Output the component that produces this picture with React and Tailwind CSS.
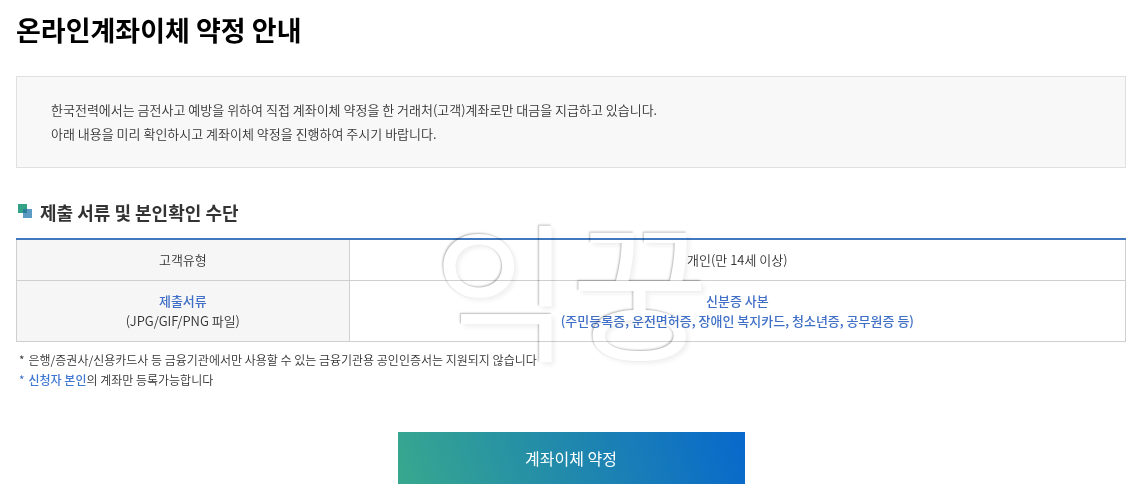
const requirements = [
  {
    label: "고객유형",
    value: "개인(만 14세 이상)",
  },
  {
    label: "제출서류",
    hint: "(JPG/GIF/PNG 파일)",
    value: "신분증 사본",
    detail: "(주민등록증, 운전면허증, 장애인 복지카드, 청소년증, 공무원증 등)",
  },
];

function SquaresIcon() {
  return (
    <svg className="size-4" viewBox="0 0 16 16" aria-hidden="true">
      <rect x="2" y="0" width="9" height="9" fill="#34a287" />
      <rect x="7" y="5" width="9" height="9" fill="#5c9bc4" />
      <rect x="7" y="5" width="4" height="4" fill="#2b7f98" />
    </svg>
  );
}

function RequirementsTable() {
  return (
    <table className="w-full table-fixed border-collapse border border-t-2 border-[#cfcfcf] border-t-[#4278be] text-center text-[13px] leading-5 font-[350] text-[#333]">
      <tbody>
        {requirements.map((row) => (
          <tr key={row.label} className="border-b border-[#cfcfcf]">
            <th
              scope="row"
              className="w-[30%] border-r border-[#cfcfcf] bg-[#f6f6f6] px-2 py-[10px] font-[350]"
            >
              {row.hint ? (
                <>
                  <strong className="block font-medium text-[#3f6fc6]">{row.label}</strong>
                  {row.hint}
                </>
              ) : (
                row.label
              )}
            </th>
            <td className="px-2 py-[10px]">
              {row.detail ? (
                <strong className="font-medium text-[#3f6fc6]">
                  {row.value}
                  <br />
                  {row.detail}
                </strong>
              ) : (
                row.value
              )}
            </td>
          </tr>
        ))}
      </tbody>
    </table>
  );
}

export default function App() {
  return (
    <main className="bg-white px-4 pt-3 pb-4 font-['Noto_Sans_CJK_KR',sans-serif] break-keep">
      <h1 className="text-[27px] leading-9 font-bold text-black">온라인계좌이체 약정 안내</h1>

      <p className="mt-7 border border-[#e0e0e0] bg-[#f8f8f8] px-[34px] py-[21px] text-[13px] leading-6 font-[350] text-[#333]">
        한국전력에서는 금전사고 예방을 위하여 직접 계좌이체 약정을 한 거래처(고객)계좌로만 대금을
        지급하고 있습니다.
        <br />
        아래 내용을 미리 확인하시고 계좌이체 약정을 진행하여 주시기 바랍니다.
      </p>

      <section className="relative mt-7">
        <h2 className="mb-[10px] flex items-center gap-2 text-lg leading-8 font-bold text-[#333]">
          <SquaresIcon />
          제출 서류 및 본인확인 수단
        </h2>

        <RequirementsTable />

        <ul className="mt-2 pl-[3px] text-xs leading-5 font-[350] text-[#333]">
          <li className="flex gap-1">
            <span aria-hidden="true">*</span>
            <span>
              은행/증권사/신용카드사 등 금융기관에서만 사용할 수 있는 금융기관용 공인인증서는
              지원되지 않습니다
            </span>
          </li>
          <li className="flex gap-1">
            <span className="text-[#3467c0]" aria-hidden="true">*</span>
            <span>
              <strong className="font-medium text-[#3f78d2]">신청자 본인</strong>의 계좌만
              등록가능합니다
            </span>
          </li>
        </ul>

        <div
          aria-hidden="true"
          className="pointer-events-none absolute inset-0 flex items-center justify-center pb-4 text-[150px] leading-none font-normal text-white mix-blend-multiply select-none [text-shadow:-1px_-1px_2px_rgba(0,0,0,0.28),3px_3px_4px_rgba(0,0,0,0.06)]"
        >
          익꿍
        </div>
      </section>

      <div className="mt-[42px] flex justify-center">
        <button
          type="button"
          className="h-[52px] w-full max-w-[347px] cursor-pointer bg-linear-[72deg] from-[#38a88e] to-[#0868cc] text-base font-normal text-white"
        >
          계좌이체 약정
        </button>
      </div>
    </main>
  );
}
